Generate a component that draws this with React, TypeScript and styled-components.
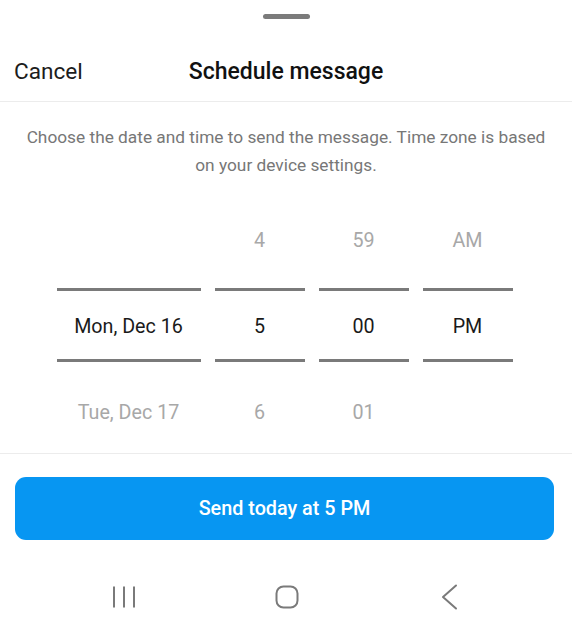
import React from 'react'
import styled, { createGlobalStyle } from 'styled-components'

const GlobalStyle = createGlobalStyle`
	html, body {
		margin: 0;
		padding: 0;
		background: #fff;
	}
	body {
		font-family: Roboto, "Noto Sans", "Liberation Sans", sans-serif;
	}
`

type Column = {
	width: number
	above: string
	current: string
	below: string
}

const columns: Column[] = [
	{ width: 144, above: '', current: 'Mon, Dec 16', below: 'Tue, Dec 17' },
	{ width: 90, above: '4', current: '5', below: '6' },
	{ width: 90, above: '59', current: '00', below: '01' },
	{ width: 90, above: 'AM', current: 'PM', below: '' },
]

function App() {
	return (
		<Sheet>
			<GlobalStyle />
			<HandleBar>
				<Handle />
			</HandleBar>

			<Header>
				<CancelButton>Cancel</CancelButton>
				<Title>Schedule message</Title>
				<span />
			</Header>

			<Description>
				Choose the date and time to send the message. Time zone is based on your device settings.
			</Description>

			<Picker>
				{columns.map((col, i) => (
					<Wheel key={i} $width={col.width}>
						<Cell $pos="above">{col.above}</Cell>
						<Cell $pos="current">{col.current}</Cell>
						<Cell $pos="below">{col.below}</Cell>
					</Wheel>
				))}
			</Picker>

			<Footer>
				<SendButton>Send today at 5 PM</SendButton>
			</Footer>

			<NavBar>
				<NavIcon>
					<svg width="24" height="24" viewBox="0 0 24 24" fill="none" stroke="#7a7a7a" strokeWidth="2">
						<line x1="2" y1="1.5" x2="2" y2="22.5" />
						<line x1="12" y1="1.5" x2="12" y2="22.5" />
						<line x1="22" y1="1.5" x2="22" y2="22.5" />
					</svg>
				</NavIcon>
				<NavIcon>
					<svg width="24" height="24" viewBox="0 0 24 24" fill="none" stroke="#7a7a7a" strokeWidth="2">
						<rect x="1.5" y="1.5" width="21" height="21" rx="7" />
					</svg>
				</NavIcon>
				<NavIcon>
					<svg width="24" height="26" viewBox="0 0 24 26" fill="none" stroke="#7a7a7a" strokeWidth="2" strokeLinecap="round" strokeLinejoin="round">
						<polyline points="18,1.5 5,13 18,24.5" />
					</svg>
				</NavIcon>
			</NavBar>
		</Sheet>
	)
}

const Sheet = styled.div`
	width: 572px;
	height: 627px;
	background: #fff;
	overflow: hidden;
	display: flex;
	flex-direction: column;
`

const HandleBar = styled.div`
	height: 40px;
	display: flex;
	justify-content: center;
	padding-top: 14px;
	box-sizing: border-box;
`

const Handle = styled.div`
	width: 47px;
	height: 5px;
	border-radius: 3px;
	background: #7b7b7b;
`

const Header = styled.div`
	height: 62px;
	display: grid;
	grid-template-columns: 1fr auto 1fr;
	align-items: center;
	border-bottom: 1px solid #ececec;
	box-sizing: border-box;
	padding: 2px 14px 0;
`

const CancelButton = styled.div`
	font-size: 22.6px;
	color: #1c1c1c;
	justify-self: start;
`

const Title = styled.div`
	font-size: 23px;
	font-weight: 500;
	color: #111;
`

const Description = styled.p`
	margin: 0;
	padding: 21px 22px 0;
	font-size: 17.3px;
	line-height: 28px;
	color: #777;
	text-align: center;
`

const Picker = styled.div`
	display: flex;
	justify-content: center;
	gap: 14px;
	margin-top: 11px;
	padding-right: 3px;
	border-bottom: 1px solid #ececec;
`

const Wheel = styled.div<{ $width: number }>`
	width: ${(p) => p.$width}px;
	display: flex;
	flex-direction: column;
`

const Cell = styled.div<{ $pos: 'above' | 'current' | 'below' }>`
	display: flex;
	align-items: center;
	justify-content: center;
	box-sizing: border-box;
	font-size: 19.7px;
	color: ${(p) => (p.$pos === 'current' ? '#1a1a1a' : '#a8a8a8')};
	height: ${(p) => (p.$pos === 'current' ? 74 : p.$pos === 'above' ? 98 : 91)}px;
	padding-top: ${(p) => (p.$pos === 'below' ? 9 : 3)}px;
	${(p) =>
		p.$pos === 'current' &&
		`
		border-top: 3px solid #7a7a7a;
		border-bottom: 3px solid #7a7a7a;
	`}
`

const Footer = styled.div`
	padding: 23px 18px 0 15px;
`

const SendButton = styled.button`
	width: 100%;
	height: 63px;
	border: 0;
	border-radius: 11px;
	background: #0796f2;
	color: #fff;
	font-family: inherit;
	font-size: 19.8px;
	font-weight: 500;
	cursor: pointer;
`

const NavBar = styled.div`
	display: flex;
	justify-content: center;
	align-items: center;
	gap: 139px;
	height: 26px;
	margin-top: 44px;
	padding-left: 1px;
`

const NavIcon = styled.div`
	width: 24px;
	height: 26px;
	display: flex;
	align-items: center;
	justify-content: center;
`

export default App
